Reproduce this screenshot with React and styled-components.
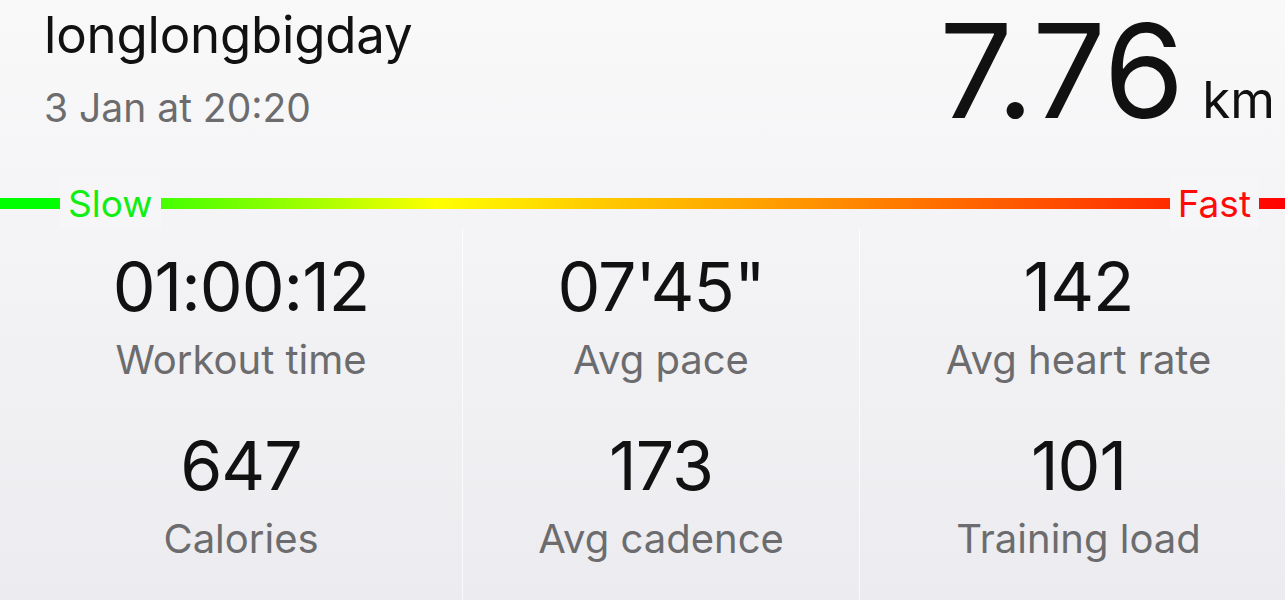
import React from "react";
import styled, { createGlobalStyle } from "styled-components";

const GlobalStyle = createGlobalStyle`
  html, body {
    margin: 0;
    padding: 0;
  }
  body {
    font-family: Inter, "Liberation Sans", sans-serif;
    background: #f1f1f4;
  }
`;

const Screen = styled.div`
  width: 1285px;
  height: 600px;
  overflow: hidden;
  background: linear-gradient(180deg, #f9f9fa 0%, #f3f3f5 45%, #ececf0 100%);
  display: flex;
  flex-direction: column;
`;

const Header = styled.div`
  display: flex;
  justify-content: space-between;
  align-items: flex-start;
  padding: 0 10px 0 44px;
  height: 178px;
`;

const TitleBlock = styled.div`
  display: flex;
  flex-direction: column;
`;

const Title = styled.div`
  font-size: 51px;
  line-height: 1;
  color: #111;
  margin-top: 9px;
  letter-spacing: -0.2px;
`;

const DateText = styled.div`
  font-size: 39px;
  line-height: 1;
  color: #6c6c6e;
  margin-top: 28px;
`;

const Distance = styled.div`
  display: flex;
  align-items: baseline;
  gap: 18px;
  margin-top: 6px;
`;

const BigNumber = styled.span`
  font-size: 130px;
  line-height: 1;
  color: #111;
  letter-spacing: 0;
`;

const Unit = styled.span`
  font-size: 51px;
  line-height: 1;
  color: #111;
`;

const PaceBar = styled.div`
  height: 11px;
  display: flex;
  align-items: center;
  margin-top: 20px;
  background: linear-gradient(
    90deg,
    #00ff00 0%,
    #00ff00 4%,
    #a0ff00 24%,
    #ffff00 34%,
    #ffd000 45%,
    #ff8c00 65%,
    #ff3000 90%,
    #ff0000 100%
  );
`;

const Spacer = styled.div`
  width: ${(p) => p.$w};
  flex: ${(p) => (p.$grow ? 1 : "none")};
  height: 100%;
`;

const PaceLabel = styled.div`
  height: 51px;
  padding: 0 8px;
  display: flex;
  align-items: center;
  background: #f6f6f8;
  color: ${(p) => p.$color};
  font-size: 37px;
  line-height: 1;
`;

const StatsGrid = styled.div`
  flex: 1;
  display: grid;
  grid-template-columns: 462px 397px 1fr;
  margin-top: 19px;
`;

const Column = styled.div`
  display: flex;
  flex-direction: column;
  border-left: ${(p) => (p.$first ? "none" : "1px solid rgba(255, 255, 255, 0.7)")};
  padding-left: ${(p) => p.$shift || 0}px;
`;

const Stat = styled.div`
  height: 179px;
  display: flex;
  flex-direction: column;
  align-items: center;
`;

const Value = styled.div`
  font-size: 68px;
  line-height: 1;
  color: #111;
  margin-top: 24px;
  letter-spacing: -1px;
`;

const Label = styled.div`
  font-size: 40px;
  line-height: 1;
  color: #6c6c6e;
  margin-top: 20px;
`;

const columns = [
  { shift: 20, stats: [["01:00:12", "Workout time"], ["647", "Calories"]] },
  { shift: 0, stats: [["07'45\"", "Avg pace"], ["173", "Avg cadence"]] },
  { shift: 12, stats: [["142", "Avg heart rate"], ["101", "Training load"]] },
];

const App = () => {
  return (
    <>
      <GlobalStyle />
      <Screen>
        <Header>
          <TitleBlock>
            <Title>longlongbigday</Title>
            <DateText>3 Jan at 20:20</DateText>
          </TitleBlock>
          <Distance>
            <BigNumber>7.76</BigNumber>
            <Unit>km</Unit>
          </Distance>
        </Header>
        <PaceBar>
          <Spacer $w="60px" />
          <PaceLabel $color="#11ee11">Slow</PaceLabel>
          <Spacer $grow />
          <PaceLabel $color="#ff0a0a">Fast</PaceLabel>
          <Spacer $w="26px" />
        </PaceBar>
        <StatsGrid>
          {columns.map((col, i) => (
            <Column key={i} $first={i === 0} $shift={col.shift}>
              {col.stats.map(([value, label]) => (
                <Stat key={label}>
                  <Value>{value}</Value>
                  <Label>{label}</Label>
                </Stat>
              ))}
            </Column>
          ))}
        </StatsGrid>
      </Screen>
    </>
  );
};

export default App;
